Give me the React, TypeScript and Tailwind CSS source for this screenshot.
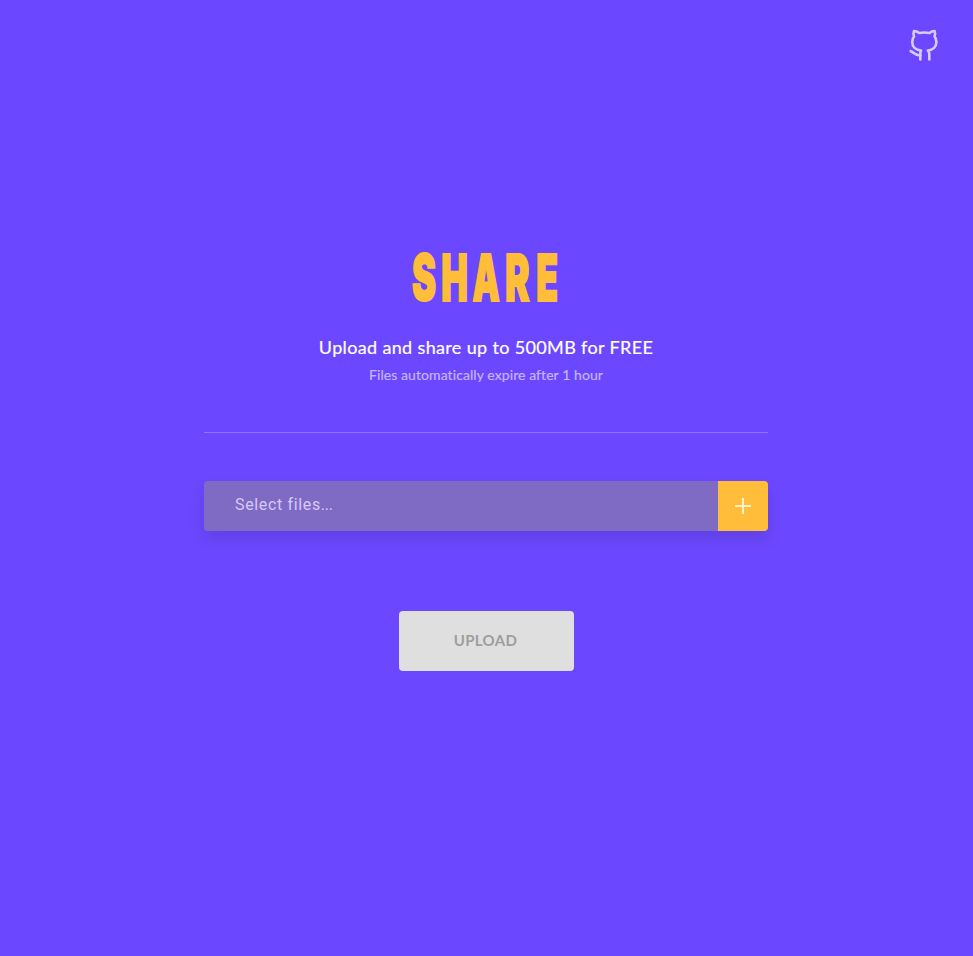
const letters = [
  { c: "S", cls: "w-[30px] scale-x-[0.56] scale-y-[0.97]" },
  { c: "H", cls: "w-[31px] scale-x-[0.55]" },
  { c: "A", cls: "w-[32px] scale-x-[0.53]" },
  { c: "R", cls: "w-[31px] scale-x-[0.57]" },
  { c: "E", cls: "ml-[3px] w-[22px] scale-x-[0.55]" },
];

export default function App() {
  return (
    <main className="flex h-screen w-full flex-col overflow-hidden bg-[#6b48ff] font-['Lato',sans-serif]">
      <header className="flex h-[92px] justify-end pt-[28px] pr-[32px]">
        <a href="#" aria-label="GitHub" className="h-[35px] w-[33px] text-[#d6cdff]">
          <svg width="33" height="35" viewBox="0 0 33 35" fill="none" stroke="currentColor" strokeWidth="2.6" strokeLinecap="round" strokeLinejoin="round">
            <path d="M12.3 31.5V26C12.3 24.5 12.4 23.4 13 22.5C7.6 22 4.2 18.8 4.2 14C4.2 11.7 4.8 9.9 6.1 8.4C5.4 6.7 5.4 4.6 6 3C8 3 9.7 3.8 11.2 5C14.7 4.3 17.9 4.3 21.4 5C22.9 3.8 24.6 3 26.6 3C27.2 4.6 27.2 6.7 26.5 8.4C27.8 9.9 28.4 11.7 28.4 14C28.4 18.8 25 22 19.8 22.5C20.7 23.5 21.3 24.5 21.3 26V31.5" />
            <path d="M12.3 27.2C7.4 28 6.5 24.5 2.7 23.2" />
          </svg>
        </a>
      </header>
      <section className="ml-[204px] flex w-[564px] flex-col items-center pt-[151px]">
        <h1 className="flex h-[70px] w-[155px] justify-start font-['Inter',sans-serif] text-[64.5px] leading-[70px] font-black text-[#ffbd39]">
          {letters.map((l) => (
            <span key={l.c} className={"flex shrink-0 justify-center [-webkit-text-stroke:2px_#ffbd39] " + l.cls}>{l.c}</span>
          ))}
        </h1>
        <p className="mt-[21px] h-[26px] text-[18px] leading-[26px] tracking-[0.35px] whitespace-nowrap text-white [-webkit-text-stroke:0.2px_#ffffff]">
          Upload and share up to 500MB for FREE
        </p>
        <p className="mt-[5px] h-[20px] text-[14px] leading-[20px] tracking-[0.08px] whitespace-nowrap text-[#c4b6ff] [-webkit-text-stroke:0.2px_#c4b6ff]">
          Files automatically expire after 1 hour
        </p>
        <hr className="mt-[47px] w-full border-t border-[#8f75ff]" />
        <div className="mt-12 flex h-[50px] w-full overflow-hidden rounded-[4px] shadow-[0_8px_16px_rgba(0,0,0,0.11)]">
          <div className="flex flex-1 items-center bg-[#7f6bc4] pl-[31px] font-['Roboto',sans-serif] text-[16px] tracking-[0.65px] text-[#d5c9fa]">
            <span className="-mt-[2px]">Select files<span className="tracking-[-0.3px]">...</span></span>
          </div>
          <button aria-label="Add files" className="flex w-[50px] items-center justify-center bg-[#ffbd39] text-[#fff0d0]">
            <svg width="16" height="16" viewBox="0 0 16 16" stroke="currentColor" strokeWidth="2"><path d="M8 0V16M0 8H16" /></svg>
          </button>
        </div>
        <button className="mt-20 ml-px h-[60px] w-[175px] rounded-[4px] bg-[#dfdfdf] pr-[2px] pb-[2px] text-[15px] font-bold tracking-[0.35px] text-[#9e9e9e]">UPLOAD</button>
      </section>
    </main>
  );
}
